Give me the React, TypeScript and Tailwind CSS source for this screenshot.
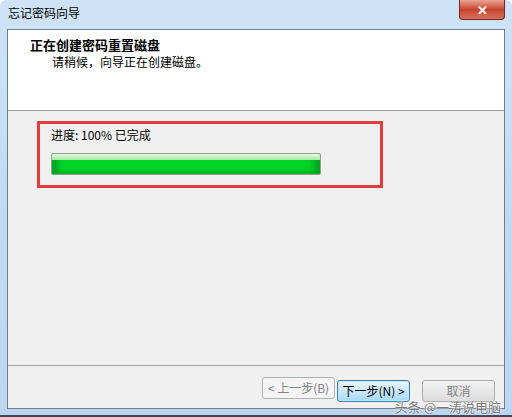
const font = { fontFamily: '"Noto Sans CJK SC", "Liberation Sans", sans-serif' };

function WizardButton({ label, primary, disabled }: { label: string; primary?: boolean; disabled?: boolean }) {
  return (
    <button
      className={
        'h-[22px] w-[73px] rounded-[3px] border text-[12px] leading-none ' +
        (primary
          ? 'border-[#3c7fb1] bg-linear-to-b from-[#eaf6fd] to-[#a7d9f5] text-black shadow-[inset_0_0_0_1px_#c4e5f6]'
          : disabled
          ? 'border-[#adb2b5] bg-[#f4f4f4] text-[#838383]'
          : 'border-[#adadad] bg-linear-to-b from-[#f2f2f2] to-[#dcdcdc] text-[#838383]')
      }
    >
      {label}
    </button>
  );
}

export default function App() {
  return (
    <div className="relative flex h-[417px] w-[512px] flex-col overflow-hidden rounded-t-[6px] bg-linear-to-b from-[#cfe3f6] via-[#c2dbf2] to-[#bcd6ef]" style={font}>
      <div className="flex h-[29px] items-start justify-between pl-2 pr-[7px]">
        <span className="mt-[7px] text-[12px] leading-none text-black">忘记密码向导</span>
        <div className="flex h-[20px] w-[46px] items-center justify-center rounded-b-[4px] border border-t-0 border-[#6d2a25] bg-linear-to-b from-[#e8a493] via-[#c7432f] to-[#d6715c] text-[13px] font-bold text-white">
          ✕
        </div>
      </div>

      <div className="mx-[7px] flex h-[380px] flex-col border border-[#6f7d8c] bg-[#f0f0f0]">
        <div className="h-[81px] border-b border-[#a0a0a0] bg-white pl-[22px] pt-[7px]">
          <div className="text-[13px] font-bold leading-[15px] text-black">正在创建密码重置磁盘</div>
          <div className="pl-[22px] pt-[3px] text-[12px] leading-[14px] text-black">请稍候，向导正在创建磁盘。</div>
        </div>

        <div className="flex-1 pl-[29px] pt-[10px]">
          <div className="h-[67px] w-[346px] border-[3px] border-[#e43c3e] pl-[11px] pt-[3px]">
            <div className="text-[12px] leading-[16px] text-black">进度: 100% 已完成</div>
            <div className="mt-[10px] h-[22px] w-[270px] overflow-hidden rounded-[2px] border border-[#8fa08f] bg-[#00d427] shadow-[inset_6px_0_6px_#06a31f,inset_-6px_0_6px_#06a31f]">
              <div className="h-[6px] bg-linear-to-b from-[#e6f8e3] to-[#a3e8a0]" />
            </div>
          </div>
        </div>

        <div className="flex h-[43px] items-start border-t border-[#a0a0a0] pl-[254px] pt-[11px]">
          <WizardButton label="< 上一步(B)" disabled />
          <div className="ml-[2px]">
            <WizardButton label="下一步(N) >" primary />
          </div>
          <div className="ml-[12px]">
            <WizardButton label="取消" />
          </div>
        </div>
      </div>

      <div className="absolute bottom-[4px] right-[11px] text-[13px] leading-none text-[#7a7a7a] [text-shadow:0_0_2px_#fff,0_0_1px_#fff]">
        头条 @一涛说电脑
      </div>
      <div className="mt-auto h-[2px] bg-[#3b4a5a]" />
    </div>
  );
}
